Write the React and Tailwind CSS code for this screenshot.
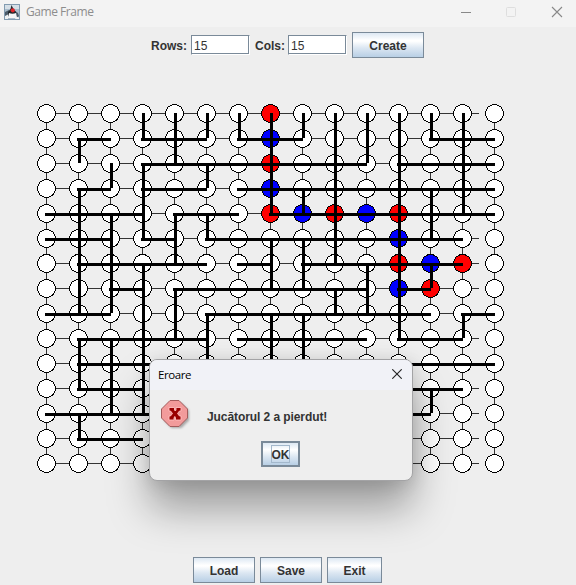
import React from "react";

const COLS = Array.from({ length: 15 }, (_, i) => i);
const ROWS = COLS;
const X = (c) => 46 + 32 * c;
const Y = (r) => 113 + 25 * r;
// Offset of the board's svg inside the window
const OX = 0;
const OY = 67;

// Walls per row: [from column, to column]
const H = {
  1: [[1, 2], [3, 5], [6, 8], [12, 14]],
  2: [[3, 10], [11, 14]],
  3: [[1, 2], [3, 5], [6, 14]],
  4: [[0, 3], [4, 6], [7, 14]],
  5: [[0, 2], [3, 4], [5, 13]],
  6: [[1, 5], [6, 7], [8, 13]],
  7: [[2, 3], [4, 10], [11, 12]],
  8: [[0, 2], [5, 12], [13, 14]],
  9: [[1, 5], [6, 10], [11, 13]],
  10: [[1, 14]],
  11: [[1, 3], [8, 13]],
  12: [[0, 12]],
  13: [[1, 3]],
};
// Walls per column: [from row, to row]
const V = {
  1: [[1, 2], [3, 8], [9, 11], [12, 13]],
  2: [[2, 3], [4, 8], [9, 12]],
  3: [[0, 1], [2, 5], [6, 12]],
  4: [[0, 2], [4, 6], [7, 9]],
  5: [[0, 1], [2, 3], [4, 5], [8, 12]],
  6: [[0, 1]],
  7: [[0, 4], [5, 7], [8, 12]],
  8: [[0, 1], [3, 4], [5, 7], [8, 12]],
  9: [[0, 6], [7, 8]],
  10: [[0, 2], [6, 8]],
  11: [[0, 9]],
  12: [[0, 1], [3, 5], [6, 7], [11, 12]],
  13: [[0, 4], [8, 9]],
};
const RED = ["0-7", "2-7", "4-7", "4-9", "4-11", "6-11", "6-13", "7-12"];
const BLUE = ["1-7", "3-7", "4-8", "4-10", "5-11", "6-12", "7-11"];
const fillOf = (k) => (RED.includes(k) ? "#ff0000" : BLUE.includes(k) ? "#0000ff" : "#ffffff");

function Board() {
  return (
    <svg width="576" height="483" viewBox={`${OX} ${OY} 576 483`} shapeRendering="crispEdges" className="block shrink-0">
      {ROWS.map((r) => (
        <rect key={r} x={X(0)} y={Y(r)} width={433} height="1" fill="#333" />
      ))}
      {COLS.map((c) => (
        <rect key={c} x={X(c)} y={Y(0)} width="1" height={350} fill="#333" />
      ))}
      {ROWS.map((r) =>
        COLS.map((c) => (
          <circle key={`${r}-${c}`} cx={X(c) + 0.5} cy={Y(r) + 0.5} r="9" fill={fillOf(`${r}-${c}`)} stroke="#000" strokeWidth="1" />
        ))
      )}
      {Object.entries(H).map(([r, list]) =>
        list.map(([a, b]) => (
          <rect key={`h${r}-${a}`} x={X(a) - 1} y={Y(+r)} width={32 * (b - a) + 2} height="3" />
        ))
      )}
      {Object.entries(V).map(([c, list]) =>
        list.map(([a, b]) => (
          <rect key={`v${c}-${a}`} x={X(+c)} y={Y(a)} width="3" height={25 * (b - a)} />
        ))
      )}
    </svg>
  );
}

const metal = "border border-[#7a8a99] bg-[linear-gradient(to_bottom,#dde8f3_0%,#ffffff_30%,#ffffff_34%,#dce7f2_62%,#b8cfe5_100%)] pt-[2px] text-[12px] font-bold text-[#333] flex items-center justify-center shrink-0";

function Field({ value }) {
  return (
    <div className="flex h-[20px] w-[59px] shrink-0 items-center border border-[#7a8a99] border-r-white border-b-white bg-white shadow-[inset_-1px_-1px_0_#7a8a99] pl-[2px] pt-[2px] text-[12px] font-normal text-[#333]">
      {value}
    </div>
  );
}

function JavaIcon() {
  return (
    <svg width="16" height="16" viewBox="0 0 16 16" className="shrink-0">
      <rect x="0.5" y="0.5" width="15" height="15" fill="#a9bccb" stroke="#829bb0" />
      <path d="M1 1h14v4H1z" fill="#d5dfe7" />
      <path d="M1 8l4-2 1 4-2 3-3 1zM11 7l3 2 1 3-2 2-3-2z" fill="#4b5b6a" />
      <path d="M7.500 1l1.500 3 3 4v4H4V8l2.500-3z" fill="#22272c" />
      <path d="M5 9c2 1 5 1 7 0l1 5H4z" fill="#f5f6f7" />
      <path d="M1 12l3-1.500V15H1zM12 12.500l3 1V15h-4z" fill="#eef1f3" />
      <circle cx="8.800" cy="6.300" r="2.100" fill="#e0252b" />
    </svg>
  );
}

function ErrorIcon() {
  return (
    <svg width="32" height="32" viewBox="0 0 32 32" className="shrink-0">
      <defs>
        <filter id="soft" x="-20%" y="-20%" width="140%" height="140%">
          <feGaussianBlur stdDeviation="1" />
        </filter>
      </defs>
      <path d="M10 2.500h10l7.500 7.500v10L20 27.500H10L2.500 20V10z" fill="#777" opacity="0.6" filter="url(#soft)" transform="translate(.5 .5)" />
      <path d="M9 .5h9l8.500 8.500v9L18 26.500H9L.5 18V9z" fill="#f29b9b" stroke="#a35c5c" />
      <path d="M8 7.500h5.500V10l.8 1 .7-1V7.500h5V11h-1.500l-2 2.500 2 2.500H20v4h-5.500v-2l-.7-1.500-.8 1.500v2H8v-4h1.500l2-2.500-2-2.500H8z" fill="#990000" stroke="#ffc0c0" strokeWidth="0.900" />
    </svg>
  );
}

function Dialog() {
  return (
    <div className="absolute left-[149px] top-[359px] flex h-[122px] w-[264px] flex-col overflow-visible rounded-[8px] border border-[#a3a3a5] bg-[#eee] shadow-[0_28px_40px_rgba(0,0,0,0.34),0_2px_18px_rgba(0,0,0,0.12)]">
      <div className="flex h-[30px] shrink-0 items-center justify-between rounded-t-[7px] bg-[#f1f2f7] pl-2 pr-[10px]">
        <span className="w-[35px] whitespace-nowrap font-['Open_Sans','Noto_Sans',sans-serif] text-[11.500px] tracking-[-0.400px] text-black">Eroare</span>
        <svg width="10" height="10" viewBox="0 0 10 10" className="mb-[2px]">
          <path d="M.3 .3l9.400 9.400M9.700 .3L.3 9.700" stroke="#222" strokeWidth="1.100" />
        </svg>
      </div>
      <div className="flex h-[51px] shrink-0 pl-[11px] pt-[10px]">
        <ErrorIcon />
        <span className="ml-[14px] mt-[10px] whitespace-nowrap text-[12px] font-bold leading-[14px] tracking-[-0.080px] text-[#333]">Jucătorul 2 a pierdut!</span>
      </div>
      <div className="flex justify-center pr-[1px]">
        <button className="flex h-[26px] w-[39px] items-center justify-center border-2 border-[#7a8a99] bg-[linear-gradient(to_bottom,#dde8f3_0%,#ffffff_30%,#dce7f2_62%,#b8cfe5_100%)]">
          <span className="flex h-[18px] w-[19px] items-center justify-center border border-[#a3b8cc] pt-[2px] text-[12px] font-bold text-[#333]">OK</span>
        </button>
      </div>
    </div>
  );
}

export default function App() {
  return (
    <div className="relative flex h-[585px] w-[576px] flex-col overflow-hidden bg-[#eee] font-['Liberation_Sans',Arial,sans-serif]">
      <header className="flex h-[27px] shrink-0 items-center bg-[#f3f3f3] pl-1 pb-[4px]">
        <JavaIcon />
        <span className="ml-[6px] font-['Open_Sans','Noto_Sans',sans-serif] text-[12px] tracking-[-0.450px] text-[#8d8d8d]">Game Frame</span>
        <svg width="104" height="12" viewBox="0 0 104 12" className="ml-auto mr-[12px]" fill="none">
          <path d="M1 6.500h10" stroke="#888" />
          <rect x="46.500" y="1.500" width="9" height="9" rx="1" stroke="#dedede" />
          <path d="M92 1l10 10M102 1L92 11" stroke="#888" strokeWidth="1.100" />
        </svg>
      </header>
      <div className="flex h-[40px] shrink-0 items-center pl-[151px] pb-[4px] text-[12px] font-bold text-[#333]">
        <span className="w-[40px] shrink-0 whitespace-nowrap pt-[2px]">Rows:</span>
        <Field value="15" />
        <span className="ml-[5px] w-[33px] shrink-0 whitespace-nowrap pt-[2px]">Cols:</span>
        <Field value="15" />
        <button className={`${metal} ml-[5px] h-[26px] w-[72px]`}>Create</button>
      </div>
      <Board />
      <footer className="relative z-10 flex shrink-0 gap-[5px] pl-[193px] pt-[7px]">
        <button className={`${metal} h-[26px] w-[62px]`}>Load</button>
        <button className={`${metal} h-[26px] w-[62px]`}>Save</button>
        <button className={`${metal} h-[26px] w-[55px]`}>Exit</button>
      </footer>
      <Dialog />
    </div>
  );
}
